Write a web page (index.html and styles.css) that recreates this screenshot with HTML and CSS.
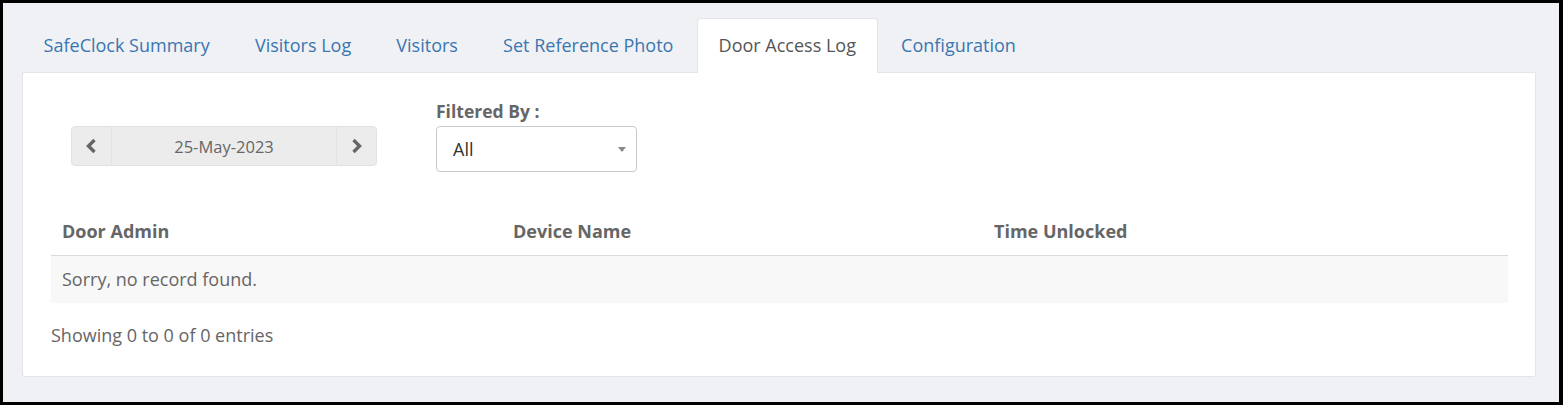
FILE: index.html
```html
<!DOCTYPE html>
<html>
<head>
<meta charset="utf-8">
<link rel="stylesheet" href="styles.css">
</head>
<body>
<div class="frame">
  <ul class="tabs">
    <li class="tab"><a>SafeClock Summary</a></li>
    <li class="tab"><a>Visitors Log</a></li>
    <li class="tab"><a>Visitors</a></li>
    <li class="tab"><a>Set Reference Photo</a></li>
    <li class="tab active"><a>Door Access Log</a></li>
    <li class="tab"><a>Configuration</a></li>
  </ul>
  <div class="card">
    <div class="filters">
      <div class="datenav">
        <button class="navbtn" aria-label="previous">
          <svg width="13" height="16" viewBox="0 0 13 16"><path d="M9.5 2 L3.5 8 L9.5 14" fill="none" stroke="#666" stroke-width="3.4"/></svg>
        </button>
        <div class="datelabel">25-May-2023</div>
        <button class="navbtn" aria-label="next">
          <svg width="13" height="16" viewBox="0 0 13 16"><path d="M3.5 2 L9.5 8 L3.5 14" fill="none" stroke="#666" stroke-width="3.4"/></svg>
        </button>
      </div>
      <div class="filter">
        <label class="flabel">Filtered By :</label>
        <div class="select">
          <span>All</span>
          <svg width="8" height="5" viewBox="0 0 8 5"><path d="M0 0 H8 L4 5 Z" fill="#888"/></svg>
        </div>
      </div>
    </div>
    <table class="grid">
      <thead>
        <tr><th class="c1">Door Admin</th><th class="c2">Device Name</th><th class="c3">Time Unlocked</th></tr>
      </thead>
      <tbody>
        <tr class="empty"><td colspan="3">Sorry, no record found.</td></tr>
      </tbody>
    </table>
    <div class="info">Showing 0 to 0 of 0 entries</div>
  </div>
</div>
</body>
</html>
```

FILE: styles.css
```css
html, body {
  margin: 0;
  padding: 0;
}
body {
  font-family: "Open Sans", "Liberation Sans", sans-serif;
  color: #666;
}
.frame {
  box-sizing: border-box;
  width: 1563px;
  height: 405px;
  border: 3px solid #000;
  border-right-width: 4px;
  background: #f0f1f5;
  padding: 15px 23px 0 19px;
}
.tabs {
  list-style: none;
  margin: 0;
  padding: 0;
  display: flex;
  height: 54px;
}
.tab {
  margin-right: 2px;
  border: 1px solid transparent;
  border-bottom: none;
  border-radius: 4px 4px 0 0;
  padding: 0 20.6px 2px;
  display: flex;
  align-items: center;
  font-size: 18px;
  color: #3a76b0;
}
.tab.active {
  background: #fff;
  border-color: #e3e5e9;
  color: #555;
  position: relative;
  z-index: 1;
  margin-bottom: -1px;
  height: 55px;
  box-sizing: border-box;
}
.card {
  background: #fff;
  border: 1px solid #e3e5e9;
  border-radius: 0 0 3px 3px;
  height: 305px;
  box-sizing: border-box;
  padding: 0 27px 0 28px;
}
.filters {
  display: flex;
  align-items: flex-end;
  height: 99px;
  padding-left: 20px;
}
.datenav {
  display: flex;
  width: 306px;
  height: 40px;
  box-sizing: border-box;
  background: #ececec;
  border: 1px solid #e2e2e2;
  border-radius: 4px;
  margin-bottom: 6px;
}
.navbtn {
  width: 40px;
  border: none;
  background: transparent;
  padding: 0;
  display: flex;
  align-items: center;
  justify-content: center;
  cursor: pointer;
}
.navbtn:first-child {
  border-right: 1px solid #e2e2e2;
}
.navbtn:last-child {
  border-left: 1px solid #e2e2e2;
}
.datelabel {
  flex: 1;
  display: flex;
  align-items: center;
  justify-content: center;
  font-size: 16.5px;
  color: #666;
}
.filter {
  margin-left: 59px;
  display: flex;
  flex-direction: column;
}
.flabel {
  font-weight: 700;
  font-size: 17.5px;
  color: #666;
  margin-bottom: 4px;
  line-height: 22px;
}
.select {
  box-sizing: border-box;
  width: 201px;
  height: 46px;
  border: 1px solid #c9c9c9;
  border-radius: 4px;
  display: flex;
  align-items: center;
  justify-content: space-between;
  padding: 0 10px 0 16px;
  font-size: 18px;
  color: #333;
}
.grid {
  width: 100%;
  border-collapse: collapse;
  margin-top: 38px;
  font-size: 18px;
}
.grid th {
  text-align: left;
  font-weight: 700;
  color: #666;
  padding: 10px 11px 13px;
  border-bottom: 1px solid #dadada;
  line-height: 22px;
}
.grid th.c1 { width: 429px; }
.grid th.c2 { width: 459px; }
.empty td {
  background: #f8f8f8;
  padding: 12px 11px 13px;
  line-height: 22px;
  color: #666;
}
.info {
  font-size: 18px;
  line-height: 22px;
  margin-top: 21px;
  color: #666;
}
```
